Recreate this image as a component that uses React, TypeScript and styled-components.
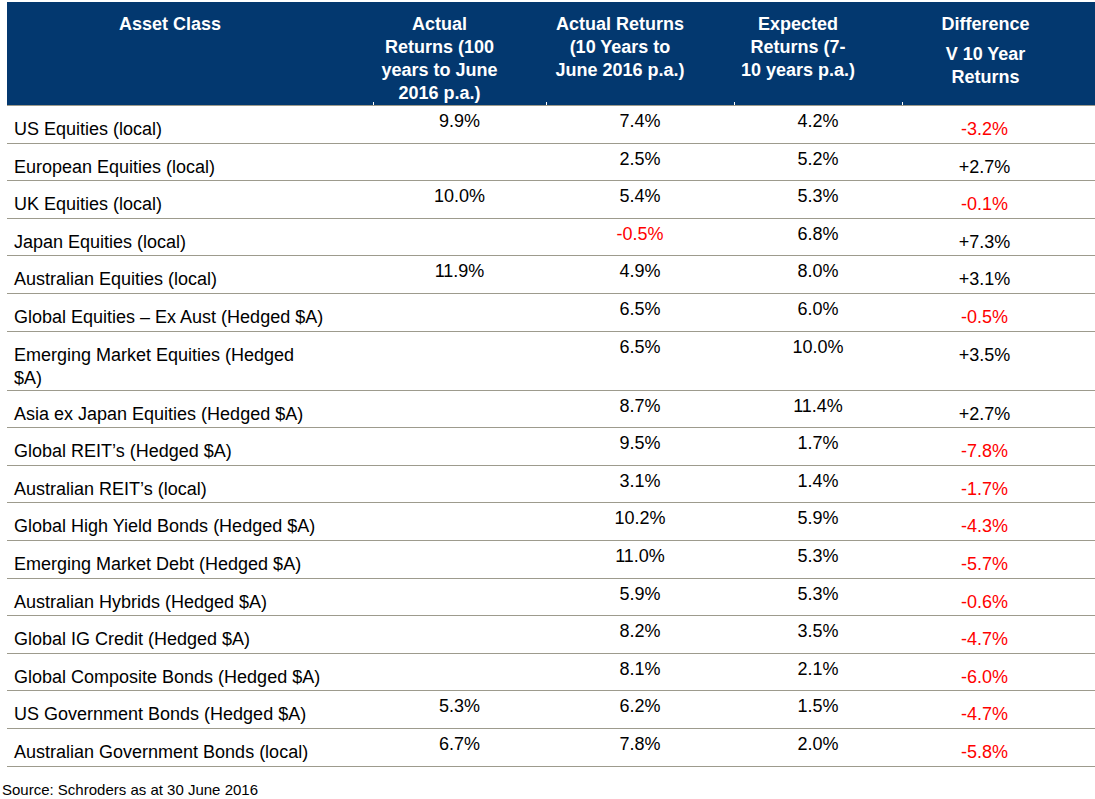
import React from 'react';
import styled, { createGlobalStyle } from 'styled-components';

type Row = {
  asset: React.ReactNode;
  century?: string;
  decade: string;
  expected: string;
  difference: string;
  tall?: boolean;
};

const rows: Row[] = [
  { asset: 'US Equities (local)', century: '9.9%', decade: '7.4%', expected: '4.2%', difference: '-3.2%' },
  { asset: 'European Equities (local)', decade: '2.5%', expected: '5.2%', difference: '+2.7%' },
  { asset: 'UK Equities (local)', century: '10.0%', decade: '5.4%', expected: '5.3%', difference: '-0.1%' },
  { asset: 'Japan Equities (local)', decade: '-0.5%', expected: '6.8%', difference: '+7.3%' },
  { asset: 'Australian Equities (local)', century: '11.9%', decade: '4.9%', expected: '8.0%', difference: '+3.1%' },
  { asset: 'Global Equities – Ex Aust (Hedged $A)', decade: '6.5%', expected: '6.0%', difference: '-0.5%' },
  {
    asset: (
      <>
        Emerging Market Equities (Hedged
        <br />
        $A)
      </>
    ),
    decade: '6.5%',
    expected: '10.0%',
    difference: '+3.5%',
    tall: true,
  },
  { asset: 'Asia ex Japan Equities (Hedged $A)', decade: '8.7%', expected: '11.4%', difference: '+2.7%' },
  { asset: 'Global REIT’s (Hedged $A)', decade: '9.5%', expected: '1.7%', difference: '-7.8%' },
  { asset: 'Australian REIT’s (local)', decade: '3.1%', expected: '1.4%', difference: '-1.7%' },
  { asset: 'Global High Yield Bonds (Hedged $A)', decade: '10.2%', expected: '5.9%', difference: '-4.3%' },
  { asset: 'Emerging Market Debt (Hedged $A)', decade: '11.0%', expected: '5.3%', difference: '-5.7%' },
  { asset: 'Australian Hybrids (Hedged $A)', decade: '5.9%', expected: '5.3%', difference: '-0.6%' },
  { asset: 'Global IG Credit (Hedged $A)', decade: '8.2%', expected: '3.5%', difference: '-4.7%' },
  { asset: 'Global Composite Bonds (Hedged $A)', decade: '8.1%', expected: '2.1%', difference: '-6.0%' },
  { asset: 'US Government Bonds (Hedged $A)', century: '5.3%', decade: '6.2%', expected: '1.5%', difference: '-4.7%' },
  {
    asset: 'Australian Government Bonds (local)',
    century: '6.7%',
    decade: '7.8%',
    expected: '2.0%',
    difference: '-5.8%',
  },
];

const isNegative = (value?: string) => !!value && value.startsWith('-');

const App: React.FC = () => {
  return (
    <>
      <GlobalStyle />
      <Page>
        <Table>
          <HeaderRow>
            <HeaderCell>Asset Class</HeaderCell>
            <HeaderCell tick>
              Actual
              <br />
              Returns (100
              <br />
              years to June
              <br />
              2016 p.a.)
            </HeaderCell>
            <HeaderCell tick>
              Actual Returns
              <br />
              (10 Years to
              <br />
              June 2016 p.a.)
            </HeaderCell>
            <HeaderCell tick>
              Expected
              <br />
              Returns (7-
              <br />
              10 years p.a.)
            </HeaderCell>
            <HeaderCell tick narrow>
              <HeaderTitle>Difference</HeaderTitle>
              V 10 Year
              <br />
              Returns
            </HeaderCell>
          </HeaderRow>
          {rows.map((row, index) => (
            <DataRow key={index} tall={row.tall}>
              <AssetCell>{row.asset}</AssetCell>
              <ValueCell negative={isNegative(row.century)}>{row.century}</ValueCell>
              <ValueCell negative={isNegative(row.decade)}>{row.decade}</ValueCell>
              <ValueCell negative={isNegative(row.expected)}>{row.expected}</ValueCell>
              <DifferenceCell negative={isNegative(row.difference)}>{row.difference}</DifferenceCell>
            </DataRow>
          ))}
        </Table>
        <Source>Source: Schroders as at 30 June 2016</Source>
      </Page>
    </>
  );
};

export default App;

const GlobalStyle = createGlobalStyle`
  html, body {
    margin: 0;
    padding: 0;
    background: #ffffff;
  }

  body {
    font-family: "Liberation Sans", Arial, sans-serif;
    color: #000000;
  }
`;

const Page = styled.div`
  width: 1095px;
  padding-top: 2px;
`;

const Table = styled.div`
  margin-left: 7px;
  width: 1088px;
  display: flex;
  flex-direction: column;
`;

const columns = '366px 173px 188px 168px 193px';

const HeaderRow = styled.div`
  display: grid;
  grid-template-columns: ${columns};
  height: 104px;
  box-sizing: border-box;
  background: #03386f;
  border-bottom: 1px solid #9d9b8d;
`;

type HeaderCellProps = {
  tick?: boolean;
  narrow?: boolean;
};

const HeaderCell = styled.div<HeaderCellProps>`
  padding: 11px ${(props) => (props.narrow ? '26px' : '40px')} 0 0;
  color: #ffffff;
  font-size: 18px;
  font-weight: 700;
  line-height: 23px;
  text-align: center;
  background: ${(props) =>
    props.tick ? 'linear-gradient(#ffffff, #ffffff) left bottom / 1px 3px no-repeat' : 'none'};
`;

const HeaderTitle = styled.div`
  margin-bottom: 7px;
`;

type DataRowProps = {
  tall?: boolean;
};

const DataRow = styled.div<DataRowProps>`
  display: grid;
  grid-template-columns: ${columns};
  height: ${(props) => (props.tall ? '59px' : '37.6px')};
  box-sizing: border-box;
  border-bottom: 1px solid #9d9b8d;
  font-size: 18px;
  line-height: 23px;
`;

const AssetCell = styled.div`
  padding: 12px 0 0 7px;
  line-height: 23px;
`;

type ValueProps = {
  negative?: boolean;
};

const ValueCell = styled.div<ValueProps>`
  padding-top: 4px;
  text-align: center;
  color: ${(props) => (props.negative ? '#ff0000' : '#000000')};
`;

const DifferenceCell = styled.div<ValueProps>`
  padding: 12px 28px 0 0;
  text-align: center;
  color: ${(props) => (props.negative ? '#ff0000' : '#000000')};
`;

const Source = styled.div`
  margin: 14px 0 0 2px;
  font-size: 15px;
  line-height: 18px;
`;
